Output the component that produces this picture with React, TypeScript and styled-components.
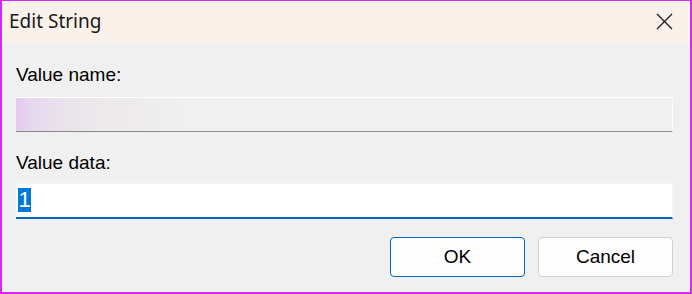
import React from "react";
import styled, { createGlobalStyle } from "styled-components";

const Global = createGlobalStyle`
  html, body { margin: 0; padding: 0; background: #f0f0f0; }
  * { box-sizing: border-box; }
`;

const Window = styled.div`
  width: 692px;
  height: 294px;
  border: 2px solid #d42af5;
  border-top-width: 1px;
  background: #f0f0f0;
  display: flex;
  flex-direction: column;
  overflow: hidden;
`;

const TitleBar = styled.div`
  height: 43px;
  flex: none;
  background: #f9f1ea;
  border-bottom: 1px solid #f4f0ee;
  display: flex;
  align-items: center;
  justify-content: space-between;
  padding: 0 16px 0 7px;
`;

const Title = styled.span`
  font-family: "Noto Sans", "Open Sans", sans-serif;
  font-size: 19px;
  color: #1a1a1a;
  margin-top: -2px;
`;

const Close = styled.button`
  border: none;
  background: transparent;
  padding: 0;
  width: 20px;
  height: 20px;
  display: flex;
  align-items: center;
  justify-content: center;
  margin-top: -2px;
`;

const Body = styled.div`
  flex: 1;
  display: flex;
  flex-direction: column;
  padding: 20px 17px 0 14px;
`;

const Label = styled.label`
  font-family: "Liberation Sans", Arial, sans-serif;
  font-size: 19px;
  line-height: 22px;
  color: #000;
`;

const Field = styled.div<{ $active?: boolean }>`
  margin-top: ${(p) => (p.$active ? "9px" : "11px")};
  margin-bottom: ${(p) => (p.$active ? "18px" : "20px")};
  height: ${(p) => (p.$active ? "36px" : "35px")};
  display: flex;
  align-items: center;
  padding-left: 2px;
  font-family: "Liberation Sans", Arial, sans-serif;
  font-size: 22px;
  background: ${(p) => (p.$active ? "#ffffff" : "#f0f0f0")};
  border-top: 1px solid ${(p) => (p.$active ? "#f4f4f4" : "#ffffff")};
  border-right: 1px solid ${(p) => (p.$active ? "#f4f4f4" : "#fbfbfb")};
  border-bottom: ${(p) => (p.$active ? "2px solid #0067c0" : "1px solid #8a8a8a")};
  position: relative;
  overflow: hidden;
`;

const Redacted = styled.div`
  position: absolute;
  left: 0;
  top: 0;
  bottom: 0;
  width: 170px;
  background: linear-gradient(90deg, #e2c9f0 0%, #e6d8ef 9%, #ebe6ea 35%, #f0f0f0 100%);
`;

const Selected = styled.span`
  background: #0078d7;
  color: #ffffff;
  height: 24px;
  line-height: 24px;
  padding: 0 0.5px;
  margin-top: -2px;
`;

const Buttons = styled.div`
  display: flex;
  justify-content: flex-end;
  gap: 13px;
`;

const Button = styled.button<{ $primary?: boolean }>`
  width: 135px;
  height: 40px;
  border-radius: 4px;
  background: #fdfdfd;
  border: 1px solid ${(p) => (p.$primary ? "#0067c0" : "#d0d0d0")};
  font-family: "Liberation Sans", Arial, sans-serif;
  font-size: 19px;
  color: #000;
`;

export default function App() {
  return (
    <>
      <Global />
      <Window>
        <TitleBar>
          <Title>Edit String</Title>
          <Close aria-label="Close">
            <svg width="17" height="17" viewBox="0 0 17 17">
              <path d="M1 1 L16 16 M16 1 L1 16" stroke="#1a1a1a" strokeWidth="1.3" />
            </svg>
          </Close>
        </TitleBar>
        <Body>
          <Label>Value name:</Label>
          <Field>
            <Redacted />
          </Field>
          <Label>Value data:</Label>
          <Field $active>
            <Selected>1</Selected>
          </Field>
          <Buttons>
            <Button $primary>OK</Button>
            <Button>Cancel</Button>
          </Buttons>
        </Body>
      </Window>
    </>
  );
}
